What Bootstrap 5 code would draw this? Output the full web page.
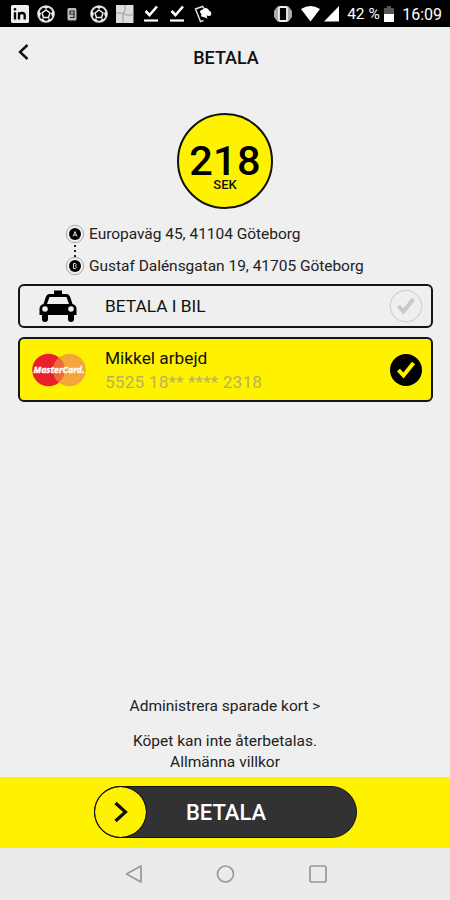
<!DOCTYPE html>
<html lang="sv">
<head>
<meta charset="utf-8">
<meta name="viewport" content="width=device-width, initial-scale=1">
<title>Betala</title>
<link href="https://cdn.jsdelivr.net/npm/bootstrap@5.3.0/dist/css/bootstrap.min.css" rel="stylesheet">
<style>
  body { font-family: Roboto, "Liberation Sans", sans-serif; background: #efefef; color: #111; }
  svg { display: block; flex: none; }
  .screen { width: 450px; height: 900px; }
  .status { height: 27px; padding: 0 8px 0 10px; font-size: 16px; line-height: 27px; }
  .status-left { gap: 6.2px; }
  .status-right { padding-top: 1px; }
  .pct { width: 33px; font-size: 15.5px; white-space: nowrap; }
  .topbar { height: 61px; padding-left: 14px; }
  .topbar h1 { font-size: 18px; line-height: 22px; padding: 0 50px 0 18px; }
  .back { margin-bottom: 11px; }
  .price { width: 96px; height: 96px; margin-top: 25px; background: #fff200; border: 2px solid #111; padding-top: 29px; }
  .amount { font-size: 41.5px; line-height: 34px; letter-spacing: .2px; font-weight: 500; color: #000; }
  .currency { font-size: 13px; line-height: 13px; font-weight: 500; }
  .route { margin: 14px 0 0 65px; font-size: 15.5px; line-height: 22px; gap: 4px; color: #222; letter-spacing: -.03px; }
  .route-lines { gap: 10px; }
  .methods { margin: 7px 17px 0 18px; gap: 9px; }
  .method { border: 2px solid #151515; border-radius: 6px; padding: 0 8.5px 0 12px; font-size: 17.3px; line-height: 24px; }
  .m-car { height: 44px; }
  .m-card { height: 65px; background: #fff200; }
  .m-icon { width: 56px; margin-right: 17px; }
  .digits { color: #bab15c; letter-spacing: .13px; }
  .logo-text { font: italic 700 9.5px "Open Sans", "Liberation Sans", sans-serif; }
  .notes { font-size: 15.5px; line-height: 21px; color: #222; }
  .terms { margin: 14px 0 4px; }
  .paybar { height: 71px; background: #fff200; padding-bottom: 1px; }
  .slide { width: 263px; height: 52px; background: #323134; border: 1.5px solid #151515; }
  .knob { width: 51px; height: 50px; background: #fff200; outline: 1.5px solid #151515; }
  .slide-label { font-size: 22px; font-weight: 500; margin-right: 51px; padding-left: 2px; line-height: 28px; padding-top: 2px; }
  .navkeys { height: 52px; background: #ebebeb; padding: 0 122px 0 124px; }
</style>
</head>
<body>
<main class="screen d-flex flex-column overflow-hidden">
  <div class="status bg-black text-white d-flex justify-content-between align-items-center">
    <div class="status-left d-flex align-items-center">
      <svg width="20" height="20" viewBox="0 0 20 20"><rect x="1" y="1" width="18" height="18" rx="1.500" fill="#eee"/><path d="M5 8.200V15.500M9 15.500V8.200M9 11Q9.500 9 12 9Q14.700 9 14.700 11.500V15.500" fill="none" stroke="#000" stroke-width="2.300"/><circle cx="5" cy="5.200" r="1.300"/></svg>
      <svg width="20" height="20" viewBox="0 0 20 20"><circle cx="10" cy="10" r="7.800" fill="none" stroke="#ddd" stroke-width="2"/><path d="M10 6l4 3-1.500 4.500h-5L6 9z" fill="none" stroke="#eee" stroke-width="1.500"/><path d="M6.500 2.500h7L10 5zM2 7l3 2-1 4-2-2zM18 7l-3 2 1 4 2-2zM5 16l2-2 2 4zM15 16l-2-2-2 4z" fill="#eee"/></svg>
      <svg width="20" height="20" viewBox="0 0 20 20"><rect x="5.500" y="4" width="9" height="12.500" rx="1.500" fill="#bbb"/><path d="M8 7v3h4V7H8M12 10v3.500H8" fill="none" stroke="#222" stroke-width="1.200"/></svg>
      <svg width="20" height="20" viewBox="0 0 20 20"><circle cx="10" cy="10" r="7.800" fill="none" stroke="#ddd" stroke-width="2"/><path d="M10 6l4 3-1.500 4.500h-5L6 9z" fill="none" stroke="#eee" stroke-width="1.500"/><path d="M6.500 2.500h7L10 5zM2 7l3 2-1 4-2-2zM18 7l-3 2 1 4 2-2zM5 16l2-2 2 4zM15 16l-2-2-2 4z" fill="#eee"/></svg>
      <svg width="20" height="20" viewBox="0 0 20 20"><rect x="1" y="1" width="17.500" height="18" fill="#ddd"/><path d="M10 1v6l-2 3v9M1 9h7l3 2h8" fill="none" stroke="#999" stroke-width="1"/></svg>
      <svg width="20" height="20" viewBox="0 0 20 20" fill="none" stroke="#fff"><path d="M4.500 7l4 4L16 2.500" stroke-width="2.600"/><path d="M3 16.500h14" stroke-width="2.200"/></svg>
      <svg width="20" height="20" viewBox="0 0 20 20" fill="none" stroke="#fff"><path d="M4.500 7l4 4L16 2.500" stroke-width="2.600"/><path d="M3 16.500h14" stroke-width="2.200"/></svg>
      <svg width="20" height="20" viewBox="0 0 20 20"><path d="M10.500 16.500L7.500 17.500 2.500 5l7-2.500 1.500 2" fill="none" stroke="#ddd" stroke-width="1.500"/><path d="M7 8.500q0-3 3-3 2-2.500 5-.5 1 2 3 3 1 4-2 4l-2.500-.5 1 3-4-1.500q-3.500 0-2-3z" fill="#fff"/></svg>
    </div>
    <div class="status-right d-flex align-items-center">
      <svg class="me-1" width="20" height="20" viewBox="0 0 20 20"><path d="M4.500 2.500h11L19 7v6l-3.500 4.500h-11L1 13V7z" fill="#aaa"/><rect x="6" y="3" width="8" height="14" rx="1" fill="#000" stroke="#eee" stroke-width="1.800"/></svg>
      <svg class="ms-1" width="19" height="16" viewBox="0 0 19 16"><path d="M0 3Q9.500-3 19 3L9.500 15.500z" fill="#fff"/></svg>
      <svg class="ms-1" width="15" height="16" viewBox="0 0 15 16"><path d="M15 0v15.500H0z" fill="#fff"/></svg>
      <span class="pct ms-2">42 %</span>
      <svg class="ms-1" width="10" height="16" viewBox="0 0 10 16"><path d="M0 8V2h3V0h4v2h3v6z" fill="#555"/><path d="M0 8h10v8H0z" fill="#fff"/></svg>
      <span class="ms-2">16:09</span>
    </div>
  </div>

  <header class="topbar d-grid">
    <div class="d-flex align-items-center">
      <svg class="back" width="20" height="20" viewBox="0 0 20 20"><path d="M13.500 3L6 10l7.500 7" fill="none" stroke="#111" stroke-width="2.400"/></svg>
      <h1 class="m-0 flex-fill text-center">BETALA</h1>
    </div>
  </header>

  <div class="price rounded-circle mx-auto text-center flex-shrink-0">
    <div class="amount">218</div>
    <div class="currency">SEK</div>
  </div>

  <div class="route d-flex">
    <svg width="20" height="54" viewBox="0 0 20 54">
      <g fill="none" stroke="#aaa"><circle cx="10" cy="11" r="8.700"/><circle cx="10" cy="43" r="8.700"/></g>
      <circle cx="10" cy="11" r="6"/><circle cx="10" cy="43" r="6"/>
      <path d="M8 13.500L10 8.500l2 5M8.700 12h2.600M8.500 40.500h2q1.500 1.200 0 2.500 2 1.200 0 2.500h-2z" fill="none" stroke="#ddd"/>
      <path d="M10 22v12" stroke="#222" stroke-width="2" stroke-dasharray="2 3"/>
    </svg>
    <div class="route-lines d-flex flex-column">
      <div>Europaväg 45, 41104 Göteborg</div>
      <div>Gustaf Dalénsgatan 19, 41705 Göteborg</div>
    </div>
  </div>

  <div class="methods d-flex flex-column">
    <div class="method m-car d-flex align-items-center">
      <div class="m-icon d-flex justify-content-center pe-1">
        <svg width="38" height="34" viewBox="0 0 38 34"><path d="M15 5V1.500h8V5h5q2 0 3 2.500L33.500 15q4 1 4 5v6H35v4q0 3-3 3t-3-3v-4H9v4q0 3-3 3t-3-3v-4H.5v-6q0-4 4-5L7 7.500Q8 5 10 5z"/><path d="M10.500 8h17l2.500 7H8z" fill="#efefef"/><circle cx="6" cy="20" r="2.800" fill="#efefef"/><circle cx="32" cy="20" r="2.800" fill="#efefef"/></svg>
      </div>
      <span class="flex-fill">BETALA I BIL</span>
      <svg width="34" height="34" viewBox="0 0 34 34"><circle cx="17" cy="17" r="15.700" fill="none" stroke="#d3d3d6" stroke-width="1.300"/><path d="M9.500 17l5 5.500L24.500 10" fill="none" stroke="#c9c9cd" stroke-width="4"/></svg>
    </div>
    <div class="method m-card d-flex align-items-center">
      <div class="m-icon">
        <svg width="56" height="34" viewBox="0 0 56 34"><circle cx="16.500" cy="17" r="16.300" fill="#e8202c"/><circle cx="37.500" cy="17" r="16.300" fill="#f4a63a"/><path d="M27 4.500a16.300 16.300 0 0 1 0 25a16.300 16.300 0 0 1 0-25z" fill="#ef6b35"/><text class="logo-text" x="1.500" y="20.300" textLength="51" lengthAdjust="spacingAndGlyphs" fill="#fff" stroke="#fff" stroke-width=".4">MasterCard.</text></svg>
      </div>
      <div class="flex-fill">
        <div>Mikkel arbejd</div>
        <div class="digits">5525 18** **** 2318</div>
      </div>
      <svg width="34" height="34" viewBox="0 0 34 34"><circle cx="17" cy="17" r="16"/><path d="M9.500 17l5 5.500L24.500 10" fill="none" stroke="#fff200" stroke-width="4"/></svg>
    </div>
  </div>

  <div class="notes mt-auto text-center">
    <div>Administrera sparade kort &gt;</div>
    <div class="terms">Köpet kan inte återbetalas.<br>Allmänna villkor</div>
  </div>

  <div class="paybar d-flex align-items-center justify-content-center flex-shrink-0">
    <div class="slide rounded-pill d-flex align-items-center">
      <div class="knob rounded-circle d-flex align-items-center justify-content-center flex-shrink-0">
        <svg width="20" height="24" viewBox="0 0 20 24"><path d="M5.500 3L15.500 12l-10 9" fill="none" stroke="#111" stroke-width="3.200"/></svg>
      </div>
      <div class="slide-label flex-fill text-center text-white">BETALA</div>
    </div>
  </div>

  <nav class="navkeys d-flex align-items-center justify-content-between flex-shrink-0">
    <svg width="20" height="20" viewBox="0 0 20 20"><path d="M17 2v16L2.500 10z" fill="none" stroke="#999" stroke-width="1.700" stroke-linejoin="round"/></svg>
    <svg width="20" height="20" viewBox="0 0 20 20"><circle cx="9.500" cy="10" r="8" fill="none" stroke="#999" stroke-width="1.700"/></svg>
    <svg width="20" height="20" viewBox="0 0 20 20"><rect x="2" y="2" width="16" height="16" rx="2" fill="none" stroke="#999" stroke-width="1.700"/></svg>
  </nav>
</main>
<script src="https://cdn.jsdelivr.net/npm/bootstrap@5.3.0/dist/js/bootstrap.bundle.min.js"></script>
</body>
</html>
